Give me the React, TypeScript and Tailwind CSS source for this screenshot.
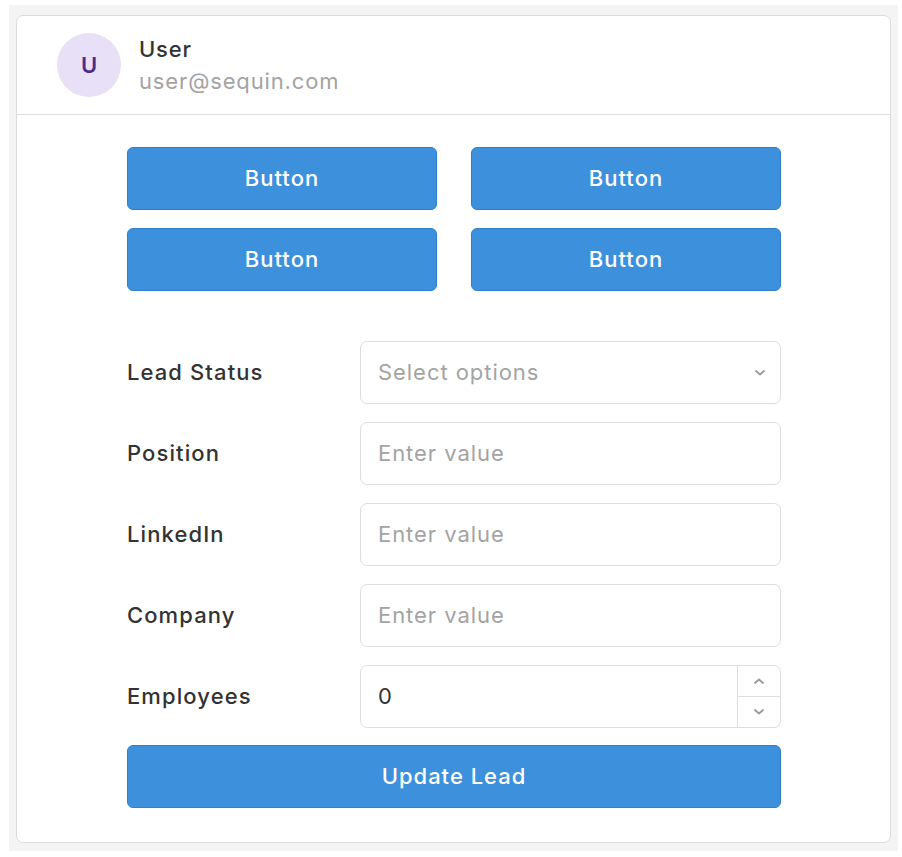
import React from "react";

const font = { fontFamily: "Inter, 'Noto Sans', sans-serif" };

function Btn({ children }: { children: React.ReactNode }) {
  return (
    <button className="h-[63px] w-full rounded-[6px] border border-[#2f7fcc] bg-[#3d90dc] text-[22px] font-medium tracking-[1px] text-white">
      {children}
    </button>
  );
}

function Row({ label, children }: { label: string; children: React.ReactNode }) {
  return (
    <div className="flex items-center">
      <div className="w-[233px] text-[22px] font-medium tracking-[1.1px] text-[#333333]">{label}</div>
      <div className="flex-1">{children}</div>
    </div>
  );
}

function TextInput() {
  return (
    <div className="flex h-[63px] items-center rounded-[7px] border border-[#dedede] bg-white px-[17px] text-[22px] tracking-[0.95px] text-[#a3a3a3]">
      Enter value
    </div>
  );
}

export default function App() {
  return (
    <div className="min-h-[857px] bg-white pl-[9px] pr-[4px] pt-[5px] pb-[7px]" style={font}>
      <div className="bg-[#f4f4f4] px-[7px] pt-[10px] pb-[8px]">
        <div className="rounded-[7px] border border-[#dcdcdc] bg-white">
          <div className="flex h-[99px] items-center border-b border-[#dcdcdc] pl-[40px]">
            <div className="flex h-[64px] w-[64px] items-center justify-center rounded-full bg-[#e8e0f6] text-[22px] font-semibold text-[#4b2d8f]">
              U
            </div>
            <div className="ml-[18px] flex flex-col">
              <div className="text-[22px] font-medium leading-[32px] tracking-[0.8px] text-[#333333]">User</div>
              <div className="text-[22px] leading-[32px] tracking-[0.85px] text-[#a3a3a3]">user@sequin.com</div>
            </div>
          </div>
          <div className="ml-[110px] w-[654px] pt-[32px] pb-[34px]">
            <div className="grid grid-cols-2 gap-x-[34px] gap-y-[18px]">
              <Btn>Button</Btn>
              <Btn>Button</Btn>
              <Btn>Button</Btn>
              <Btn>Button</Btn>
            </div>
            <div className="mt-[50px] flex flex-col gap-[18px]">
              <Row label="Lead Status">
                <div className="flex h-[63px] items-center justify-between rounded-[7px] border border-[#dedede] bg-white pl-[17px] pr-[14px] text-[22px] tracking-[0.95px] text-[#a3a3a3]">
                  <span>Select options</span>
                  <svg width="12" height="8" viewBox="0 0 12 8" fill="none">
                    <path d="M2 2l4 3.5L10 2" stroke="#9a9a9a" strokeWidth="1.8" strokeLinecap="round" strokeLinejoin="round" />
                  </svg>
                </div>
              </Row>
              <Row label="Position">
                <TextInput />
              </Row>
              <Row label="LinkedIn">
                <TextInput />
              </Row>
              <Row label="Company">
                <TextInput />
              </Row>
              <Row label="Employees">
                <div className="flex h-[63px] items-stretch rounded-[7px] border border-[#dedede] bg-white">
                  <div className="flex flex-1 items-center px-[17px] text-[22px] text-[#333333]">0</div>
                  <div className="flex w-[43px] flex-col border-l border-[#dedede]">
                    <div className="flex flex-1 items-center justify-center border-b border-[#dedede]">
                      <svg width="12" height="8" viewBox="0 0 12 8" fill="none">
                        <path d="M2 6l4-3.5L10 6" stroke="#9a9a9a" strokeWidth="1.8" strokeLinecap="round" strokeLinejoin="round" />
                      </svg>
                    </div>
                    <div className="flex flex-1 items-center justify-center">
                      <svg width="12" height="8" viewBox="0 0 12 8" fill="none">
                        <path d="M2 2l4 3.5L10 2" stroke="#9a9a9a" strokeWidth="1.8" strokeLinecap="round" strokeLinejoin="round" />
                      </svg>
                    </div>
                  </div>
                </div>
              </Row>
            </div>
            <div className="mt-[17px]">
              <Btn>Update Lead</Btn>
            </div>
          </div>
        </div>
      </div>
    </div>
  );
}
